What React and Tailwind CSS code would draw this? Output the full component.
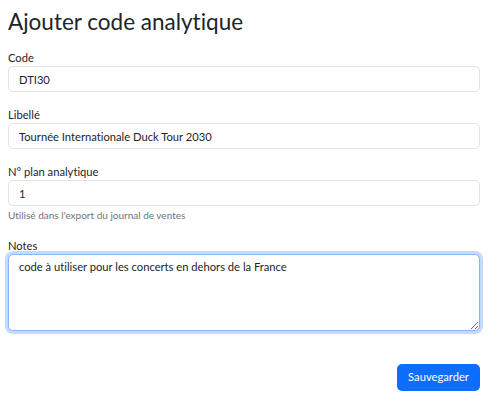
import React from "react";

function Field({ label, value, help }) {
  return (
    <div className="mb-[14px]">
      <label className="block text-[11.2px] leading-[17px] text-[#212529]">{label}</label>
      <input
        readOnly
        value={value}
        className="block w-full h-[26px] px-[10px] text-[11.2px] text-[#212529] bg-white border border-[#e3e3e3] rounded-[5px] outline-none"
      />
      {help && <div className="text-[10px] leading-[15px] text-[#6c757d] mt-[2px]">{help}</div>}
    </div>
  );
}

export default function App() {
  return (
    <div className="bg-white w-[500px] h-[407px] pl-2 pr-5 pt-2 font-['Lato','Noto_Sans',sans-serif] [font-variant-ligatures:none]">
      <h3 className="text-[22.5px] leading-[27px] text-[#212529] mb-[14px]">Ajouter code analytique</h3>
      <Field label="Code" value="DTI30" />
      <Field label="Libellé" value="Tournée Internationale Duck Tour 2030" />
      <Field label="N° plan analytique" value="1" help="Utilisé dans l'export du journal de ventes" />
      <div>
        <label className="block text-[11.2px] leading-[17px] text-[#212529]">Notes</label>
        <textarea
          readOnly
          value="code à utiliser pour les concerts en dehors de la France"
          className="block w-full h-[77px] px-[10px] py-[3px] text-[11.2px] leading-[17px] text-[#212529] bg-white border border-[#86b7fe] rounded-[5px] outline-none shadow-[0_0_0_3px_rgba(13,110,253,0.25)] resize-y"
        />
      </div>
      <div className="flex justify-end mt-[33px]">
        <button className="w-[83px] h-[27px] text-[11.2px] text-white bg-[#0d6efd] rounded-[5px]">Sauvegarder</button>
      </div>
    </div>
  );
}
